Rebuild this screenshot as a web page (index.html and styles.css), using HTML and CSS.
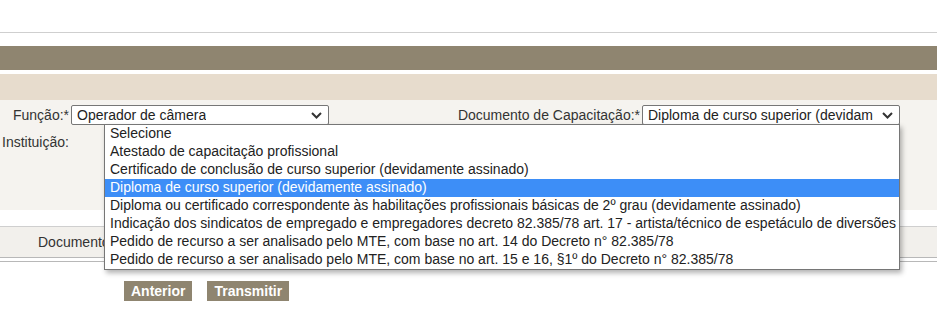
FILE: index.html
```html
<!DOCTYPE html>
<html lang="pt-BR">
<head>
    <meta charset="UTF-8">
    <title>Cadastro</title>
    <link rel="stylesheet" href="styles.css">
</head>
<body>
    <div class="topbar"></div>
    <div class="band-dark"></div>
    <div class="band-light"></div>
    <div class="form">
        <div class="row">
            <div class="field">
                <label class="lbl">Função:*</label>
                <div class="select select-funcao">
                    <span class="select-text">Operador de câmera</span>
                    <svg class="chev" width="11" height="7" viewBox="0 0 11 7"><path d="M1 1l4.5 4.5L10 1" fill="none" stroke="#333" stroke-width="2"/></svg>
                </div>
            </div>
            <div class="field field-doc">
                <label class="lbl">Documento de Capacitação:*</label>
                <div class="select select-doc">
                    <span class="select-text">Diploma de curso superior (devidam</span>
                    <svg class="chev" width="11" height="7" viewBox="0 0 11 7"><path d="M1 1l4.5 4.5L10 1" fill="none" stroke="#333" stroke-width="2"/></svg>
                </div>
                <ul class="dropdown">
                    <li>Selecione</li>
                    <li>Atestado de capacitação profissional</li>
                    <li>Certificado de conclusão de curso superior (devidamente assinado)</li>
                    <li class="active">Diploma de curso superior (devidamente assinado)</li>
                    <li>Diploma ou certificado correspondente às habilitações profissionais básicas de 2º grau (devidamente assinado)</li>
                    <li>Indicação dos sindicatos de empregado e empregadores decreto 82.385/78 art. 17 - artista/técnico de espetáculo de diversões</li>
                    <li>Pedido de recurso a ser analisado pelo MTE, com base no art. 14 do Decreto n° 82.385/78</li>
                    <li>Pedido de recurso a ser analisado pelo MTE, com base no art. 15 e 16, §1º do Decreto n° 82.385/78</li>
                </ul>
            </div>
        </div>
        <div class="row">
            <label class="lbl lbl-inst">Instituição:</label>
        </div>
    </div>
    <div class="doc-band">
        <span class="doc-title">Documento</span>
    </div>
    <div class="double-line"></div>
    <div class="actions">
        <button class="btn">Anterior</button>
        <button class="btn">Transmitir</button>
    </div>
</body>
</html>
```

FILE: styles.css
```css
body {
    margin: 0;
    font-family: 'Liberation Sans', Arial, sans-serif;
    font-size: 14px;
    color: #333;
    background-color: #fff;
}
.topbar {
    height: 32px;
    border-bottom: 1px solid #cfcfcf;
    margin-bottom: 13px;
}
.band-dark {
    height: 24px;
    background-color: #8f8570;
    margin-bottom: 4px;
}
.band-light {
    height: 26px;
    background-color: #e7dccd;
}
.form {
    background-color: #f5f3ef;
    height: 110px;
    padding-top: 5px;
    box-sizing: border-box;
}
.row {
    display: flex;
    align-items: center;
}
.field {
    display: flex;
    align-items: center;
    position: relative;
}
.field-doc {
    margin-left: auto;
    margin-right: 37px;
}
.lbl {
    color: #333;
    margin-right: 2px;
}
.row:first-child .field:first-child .lbl {
    margin-left: 13px;
}
.lbl-inst {
    margin-left: 2px;
    margin-top: 9px;
}
.select {
    height: 20px;
    width: 258px;
    border: 1px solid #767676;
    border-radius: 2px;
    background-color: #fff;
    display: flex;
    align-items: center;
    justify-content: space-between;
    padding: 0 6px 0 5px;
    box-sizing: border-box;
    color: #222;
    overflow: hidden;
}
.select-text {
    white-space: nowrap;
    overflow: hidden;
}
.chev {
    flex-shrink: 0;
    margin-left: 4px;
}
.dropdown {
    position: absolute;
    top: 19px;
    right: 0;
    width: 794px;
    margin: 0;
    padding: 0;
    list-style: none;
    background-color: #fff;
    border: 1px solid #767676;
    box-shadow: 2px 3px 5px rgba(0, 0, 0, 0.3);
    z-index: 10;
    color: #222;
}
.dropdown li {
    height: 18px;
    line-height: 17px;
    padding-left: 5px;
    white-space: nowrap;
}
.dropdown li.active {
    background-color: #3d8ef7;
    color: #fff;
}
.doc-band {
    margin-top: 16px;
    height: 30px;
    border-top: 1px solid #cfcfcf;
    background-color: #f2f0ec;
    display: flex;
    align-items: center;
}
.doc-title {
    margin-left: 38px;
}
.double-line {
    height: 3px;
    border-top: 1px solid #b8b8b8;
    border-bottom: 1px solid #b8b8b8;
}
.actions {
    display: flex;
    gap: 15px;
    padding-left: 124px;
    margin-top: 19px;
}
.btn {
    background-color: #8f8570;
    color: #fff;
    border: none;
    font-family: 'Liberation Sans', Arial, sans-serif;
    font-weight: bold;
    font-size: 14px;
    height: 20px;
    padding: 0 7px;
    cursor: pointer;
}
```
